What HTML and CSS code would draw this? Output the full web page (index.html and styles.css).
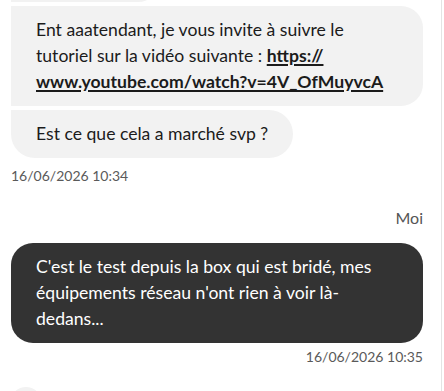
FILE: index.html
```html
<!DOCTYPE html>
<html lang="fr">
<head>
<meta charset="utf-8">
<link rel="stylesheet" href="styles.css">
</head>
<body>
<div class="frame">
  <div class="thread">
    <div class="group group-in">
      <div class="bubble bubble-in bubble-prev"></div>
      <div class="bubble bubble-in bubble-mid">Ent aaatendant, je vous invite à suivre le tutoriel sur la vidéo suivante : <a class="link" href="#">https://<wbr>www.youtube.com/watch?v=4V_OfMuyvcA</a></div>
      <div class="bubble bubble-in bubble-last">Est ce que cela a marché svp ?</div>
    </div>
    <div class="stamp">16/06/2026 10:34</div>

    <div class="author">Moi</div>
    <div class="bubble bubble-out">C'est le test depuis la box qui est bridé, mes équipements réseau n'ont rien à voir là-dedans...</div>
    <div class="stamp stamp-out">16/06/2026 10:35</div>

    <div class="avatar"></div>
  </div>
</div>
</body>
</html>
```

FILE: styles.css
```css
html, body {
  margin: 0;
  padding: 0;
  background: #ffffff;
  overflow: hidden;
}

body {
  width: 444px;
  height: 391px;
  font-family: "Lato", "Liberation Sans", sans-serif;
  color: #1b1b1b;
}

.frame {
  width: 442px;
  height: 391px;
  border-right: 1px solid #e4e4e4;
  box-sizing: border-box;
  overflow: hidden;
}

.thread {
  display: flex;
  flex-direction: column;
  padding: 0 18px 0 11px;
}

.group {
  display: flex;
  flex-direction: column;
  align-items: flex-start;
  gap: 4px;
}

.bubble {
  box-sizing: border-box;
  padding: 11px 25px;
  font-size: 17.6px;
  line-height: 26px;
  max-width: 412px;
}

.bubble-in {
  background: #f2f2f2;
  color: #1b1b1b;
  border-radius: 0 22px 22px 0;
}

.bubble-prev {
  width: 148px;
  height: 42px;
  margin-top: -40px;
}

.bubble-mid {
  width: 412px;
}

.bubble-last {
  border-radius: 0 24px 24px 24px;
}

.link {
  color: #1b1b1b;
  font-weight: 700;
  text-decoration: underline;
  text-decoration-thickness: 1.5px;
  text-underline-offset: 2px;
}

.stamp {
  margin-top: 8px;
  font-size: 14px;
  line-height: 20px;
  color: #5a5a5a;
}

.stamp-out {
  margin-top: 4px;
  text-align: right;
}

.author {
  margin-top: 22px;
  text-align: right;
  font-size: 16px;
  line-height: 20px;
  color: #555555;
}

.bubble-out {
  margin-top: 15px;
  background: #333333;
  color: #ffffff;
  border-radius: 22px;
  width: 412px;
}

.avatar {
  margin-top: 20px;
  margin-left: -1px;
  width: 32px;
  height: 32px;
  border-radius: 50%;
  background: #f2f2f2;
}
```
